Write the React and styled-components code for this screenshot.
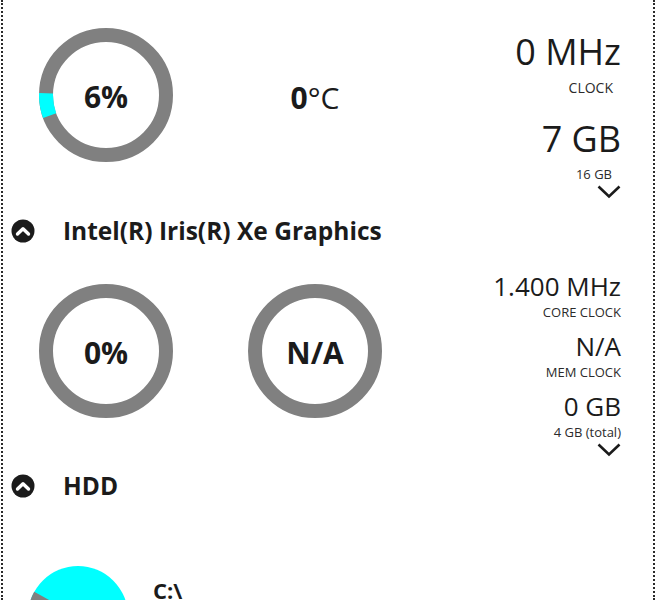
import React from "react";
import styled, { createGlobalStyle } from "styled-components";

const GlobalStyle = createGlobalStyle`
  html, body {
    margin: 0;
    padding: 0;
    background: #ffffff;
  }
  body {
    font-family: "Open Sans", "Noto Sans", sans-serif;
    color: #1b1b1b;
  }
`;

const Frame = styled.div`
  width: 654px;
  height: 600px;
  margin-left: 1px;
  box-sizing: border-box;
  border-left: 2px dotted #2a2a2a;
  border-right: 2px dotted #2a2a2a;
  overflow: hidden;
  display: flex;
  flex-direction: column;
`;

const Row = styled.div`
  display: flex;
  align-items: flex-start;
  padding-left: 36px;
  padding-right: 32px;
  margin-top: ${(p) => p.$top}px;
`;

const Cell = styled.div`
  width: 134px;
  height: 134px;
  flex-shrink: 0;
  margin-top: ${(p) => p.$top || 0}px;
  margin-left: ${(p) => p.$left || 0}px;
  display: grid;
  place-items: center;
  & > * {
    grid-area: 1 / 1;
  }
`;

const RingLabel = styled.span`
  font-size: 30px;
  font-weight: 700;
  line-height: 1;
  padding-top: ${(p) => p.$nudge || 0}px;
`;

const Temp = styled.span`
  font-size: 30px;
  line-height: 1;
  padding-top: 5px;
  font-weight: 400;
  b {
    font-weight: 700;
  }
`;

const Stats = styled.div`
  margin-left: auto;
  margin-top: ${(p) => p.$top || 0}px;
  display: flex;
  flex-direction: column;
  align-items: flex-end;
`;

const Value = styled.div`
  font-size: ${(p) => p.$size}px;
  line-height: ${(p) => p.$lh}px;
  margin-top: ${(p) => p.$gap || 0}px;
  white-space: nowrap;
`;

const Caption = styled.div`
  font-size: ${(p) => p.$size}px;
  line-height: ${(p) => p.$lh}px;
  margin-top: ${(p) => p.$gap || 0}px;
  padding-right: ${(p) => p.$inset || 0}px;
  color: #2b2b2b;
  white-space: nowrap;
`;

const Expand = styled.svg`
  display: block;
  margin-top: 2px;
`;

const Header = styled.div`
  display: flex;
  align-items: center;
  height: 30px;
  padding-left: 8px;
  gap: 28px;
  margin-top: ${(p) => p.$top}px;
`;

const Title = styled.h2`
  margin: 0;
  font-size: 24.5px;
  font-weight: 700;
  line-height: 30px;
`;

const DriveRow = styled.div`
  display: flex;
  align-items: flex-start;
  padding-left: 25px;
  gap: 25px;
  margin-top: ${(p) => p.$top}px;
`;

const DriveName = styled.div`
  font-size: 22px;
  font-weight: 700;
  line-height: 22px;
  margin-top: 13px;
`;

function Ring({ percent, label, nudge }) {
  const r = 60;
  const c = 2 * Math.PI * r;
  return (
    <>
      <svg width="134" height="134" viewBox="0 0 134 134">
        <circle cx="67" cy="67" r={r} fill="none" stroke="#808080" strokeWidth="14" />
        {percent > 0 && (
          <circle
            cx="67"
            cy="67"
            r={r}
            fill="none"
            stroke="#00ffff"
            strokeWidth="14"
            strokeDasharray={`${(percent / 100) * c} ${c}`}
            transform="rotate(160 67 67)"
          />
        )}
      </svg>
      <RingLabel $nudge={nudge}>{label}</RingLabel>
    </>
  );
}

function ChevronDown() {
  return (
    <Expand width="24" height="14" viewBox="0 0 24 14">
      <polyline points="1.5,1.5 12,11.5 22.5,1.5" fill="none" stroke="#1b1b1b" strokeWidth="2.6" />
    </Expand>
  );
}

function CollapseIcon() {
  return (
    <svg width="24" height="24" viewBox="0 0 24 24">
      <circle cx="12" cy="12" r="11.5" fill="#1b1b1b" />
      <polyline
        points="6.5,15 12,9.8 17.5,15"
        fill="none"
        stroke="#ffffff"
        strokeWidth="3.4"
        strokeLinecap="round"
        strokeLinejoin="round"
      />
    </svg>
  );
}

function Pie() {
  // cyan disk with a grey wedge for the remaining share
  const cx = 50;
  const cy = 50;
  const r = 50;
  const pt = (deg) => {
    const a = (deg * Math.PI) / 180;
    return `${cx + r * Math.cos(a)},${cy + r * Math.sin(a)}`;
  };
  return (
    <svg width="100" height="100" viewBox="0 0 100 100">
      <circle cx={cx} cy={cy} r={r} fill="#00ffff" />
      <path d={`M${cx},${cy} L${pt(150)} A${r},${r} 0 0 1 ${pt(209)} Z`} fill="#808080" />
    </svg>
  );
}

export default function App() {
  return (
    <>
      <GlobalStyle />
      <Frame>
        <Row $top={28}>
          <Cell>
            <Ring percent={6} label="6%" nudge={4} />
          </Cell>
          <Cell $left={75}>
            <Temp>
              <b>0</b>°C
            </Temp>
          </Cell>
          <Stats $top={3}>
            <Value $size={36} $lh={42}>0 MHz</Value>
            <Caption $size={14} $lh={19} $gap={5} $inset={8}>CLOCK</Caption>
            <Value $size={36} $lh={42} $gap={21}>7 GB</Value>
            <Caption $size={13} $lh={18} $gap={5} $inset={9}>16 GB</Caption>
            <ChevronDown />
          </Stats>
        </Row>

        <Header $top={17}>
          <CollapseIcon />
          <Title>Intel(R) Iris(R) Xe Graphics</Title>
        </Header>

        <Row $top={25}>
          <Cell $top={13}>
            <Ring percent={0} label="0%" nudge={4} />
          </Cell>
          <Cell $top={13} $left={75}>
            <Ring percent={0} label="N/A" nudge={4} />
          </Cell>
          <Stats>
            <Value $size={26} $lh={30}>1.400 MHz</Value>
            <Caption $size={13} $lh={17} $gap={3}>CORE CLOCK</Caption>
            <Value $size={26} $lh={30} $gap={10}>N/A</Value>
            <Caption $size={13} $lh={17} $gap={3}>MEM CLOCK</Caption>
            <Value $size={26} $lh={30} $gap={10}>0 GB</Value>
            <Caption $size={13} $lh={17} $gap={3}>4 GB (total)</Caption>
            <ChevronDown />
          </Stats>
        </Row>

        <Header $top={14}>
          <CollapseIcon />
          <Title>HDD</Title>
        </Header>

        <DriveRow $top={65}>
          <Pie />
          <DriveName>C:\</DriveName>
        </DriveRow>
      </Frame>
    </>
  );
}
